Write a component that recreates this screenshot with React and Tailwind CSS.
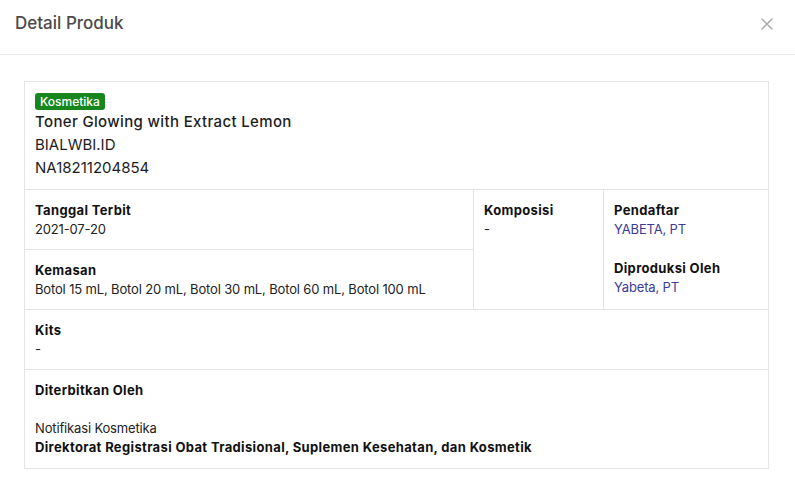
import { X } from "lucide-react";

const font = { fontFamily: "Inter, 'Noto Sans', sans-serif" };

function Field({ label, value, valueClass = "text-[#222]", className = "" }) {
  return (
    <div className={className}>
      <div className="text-[13px] leading-[20px] font-bold tracking-[0.35px] text-[#111]">{label}</div>
      <div className={`text-[13px] leading-[19px] tracking-[-0.15px] ${valueClass}`}>{value}</div>
    </div>
  );
}

export default function App() {
  return (
    <div className="min-h-screen w-[795px] bg-white" style={font}>
      {/* header */}
      <div className="flex h-[55px] items-start justify-between border-b border-[#e9e9e9] pl-[15px] pr-[18px] pt-[11px]">
        <h1 className="text-[17px] leading-[24px] font-medium text-[#4a4a4a]">Detail Produk</h1>
        <button className="mt-[3px] text-[#a9a9a9]">
          <X size={20} strokeWidth={1.7} />
        </button>
      </div>

      <div className="pl-6 pr-[26px] pt-[26px]">
        <div className="border border-[#e4e4e4]">
          {/* product head */}
          <div className="border-b border-[#e4e4e4] px-[10px] pt-[11px] pb-[10px]">
            <div className="w-fit rounded-[3px] bg-[#17871d] px-[5px] text-[12px] leading-[17px] font-medium text-white">
              Kosmetika
            </div>
            <div className="text-[15px] leading-[23px] font-medium tracking-[0.35px] text-[#1d1d1d]">
              Toner Glowing with Extract Lemon
            </div>
            <div className="text-[15px] leading-[23px] text-[#1d1d1d]">BIALWBI.ID</div>
            <div className="text-[15px] leading-[23px] text-[#1d1d1d]">NA18211204854</div>
          </div>

          {/* info grid */}
          <div className="grid grid-cols-[449px_130px_1fr] border-b border-[#e4e4e4]">
            <div className="border-r border-[#e4e4e4]">
              <Field
                label="Tanggal Terbit"
                value="2021-07-20"
                className="h-[60px] border-b border-[#e4e4e4] px-[10px] pt-[10px]"
              />
              <Field
                label="Kemasan"
                value="Botol 15 mL, Botol 20 mL, Botol 30 mL, Botol 60 mL, Botol 100 mL"
                className="h-[59px] px-[10px] pt-[10px]"
              />
            </div>
            <div className="border-r border-[#e4e4e4] px-[10px] pt-[10px]">
              <Field label="Komposisi" value="-" />
            </div>
            <div className="px-[10px] pt-[10px]">
              <Field label="Pendaftar" value="YABETA, PT" valueClass="text-[#3b3a9b]" />
              <Field
                label="Diproduksi Oleh"
                value="Yabeta, PT"
                valueClass="text-[#3b3a9b]"
                className="mt-[19px]"
              />
            </div>
          </div>

          {/* kits */}
          <Field
            label="Kits"
            value="-"
            className="h-[60px] border-b border-[#e4e4e4] px-[10px] pt-[10px]"
          />

          {/* publisher */}
          <div className="px-[10px] pt-[10px] pb-[11px]">
            <div className="text-[13px] leading-[20px] font-bold tracking-[0.35px] text-[#111]">Diterbitkan Oleh</div>
            <div className="mt-[19px] text-[13px] leading-[19px] tracking-[-0.15px] text-[#222]">Notifikasi Kosmetika</div>
            <div className="text-[13px] leading-[19px] font-bold tracking-[0.35px] text-[#111]">
              Direktorat Registrasi Obat Tradisional, Suplemen Kesehatan, dan Kosmetik
            </div>
          </div>
        </div>
      </div>
    </div>
  );
}
